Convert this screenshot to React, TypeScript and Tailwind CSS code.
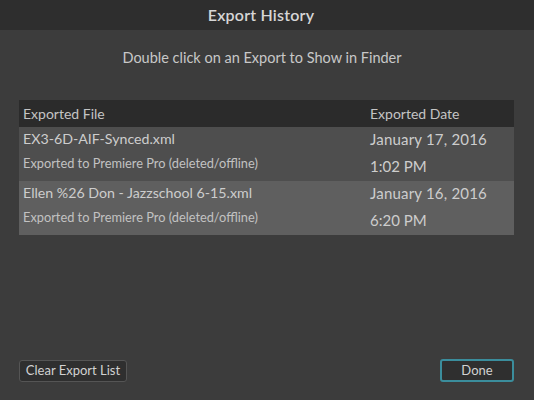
const ROWS = [
  {
    file: 'EX3-6D-AIF-Synced.xml',
    note: 'Exported to Premiere Pro (deleted/offline)',
    date: 'January 17, 2016',
    time: '1:02 PM',
  },
  {
    file: 'Ellen %26 Don - Jazzschool 6-15.xml',
    note: 'Exported to Premiere Pro (deleted/offline)',
    date: 'January 16, 2016',
    time: '6:20 PM',
  },
];

export default function App() {
  return (
    <div
      className="w-[534px] h-[400px] flex flex-col bg-[#3c3c3c] text-[#cfcfcf] overflow-hidden"
      style={{ fontFamily: 'Lato, "Noto Sans", sans-serif' }}
    >
      {/* title bar */}
      <div className="h-[30px] shrink-0 bg-[#2e2e2e] flex items-center justify-center pr-[12px]">
        <span className="text-[16px] font-semibold text-[#d6d6d6] tracking-[0.2px]">Export History</span>
      </div>

      <div className="flex-1 flex flex-col px-[19px]">
        <p className="text-center text-[14.5px] text-[#c8c8c8] mt-[17px] h-[22px] leading-[22px] pr-[10px]">
          Double click on an Export to Show in Finder
        </p>

        {/* table */}
        <div className="mt-[31px] w-[495px]">
          <div className="h-[27px] bg-[#2b2b2b] flex items-center text-[14px] text-[#c4c4c4]">
            <div className="w-[351px] pl-[4px]">Exported File</div>
            <div>Exported Date</div>
          </div>
          {ROWS.map((r, i) => (
            <div
              key={r.file}
              className={`h-[54px] flex ${i === 0 ? 'bg-[#4e4e4e]' : 'bg-[#5f5f5f]'}`}
            >
              <div className="w-[351px] pl-[4px] flex flex-col">
                <span className="text-[14.2px] leading-[20px] mt-[2px] text-[#cdcdcd]">{r.file}</span>
                <span className="text-[12.8px] leading-[16px] mt-[6px] text-[#c2c2c2]">{r.note}</span>
              </div>
              <div className="flex flex-col text-[15px] text-[#cdcdcd]">
                <span className="leading-[20px] mt-[2px] tracking-[0.2px]">{r.date}</span>
                <span className="leading-[20px] mt-[7px]">{r.time}</span>
              </div>
            </div>
          ))}
        </div>

        <div className="flex-1" />

        {/* buttons */}
        <div className="flex justify-between items-center mb-[18px]">
          <button className="h-[22px] w-[108px] rounded-[3px] bg-[#2f2f2f] border border-[#555555] text-[13px] text-[#d2d2d2] leading-none">
            Clear Export List
          </button>
          <button className="h-[23px] w-[74px] rounded-[3px] bg-[#2f2f2f] border-2 border-[#3b8d9c] text-[13px] text-[#d2d2d2] leading-none mr-[1px]">
            Done
          </button>
        </div>
      </div>
    </div>
  );
}
